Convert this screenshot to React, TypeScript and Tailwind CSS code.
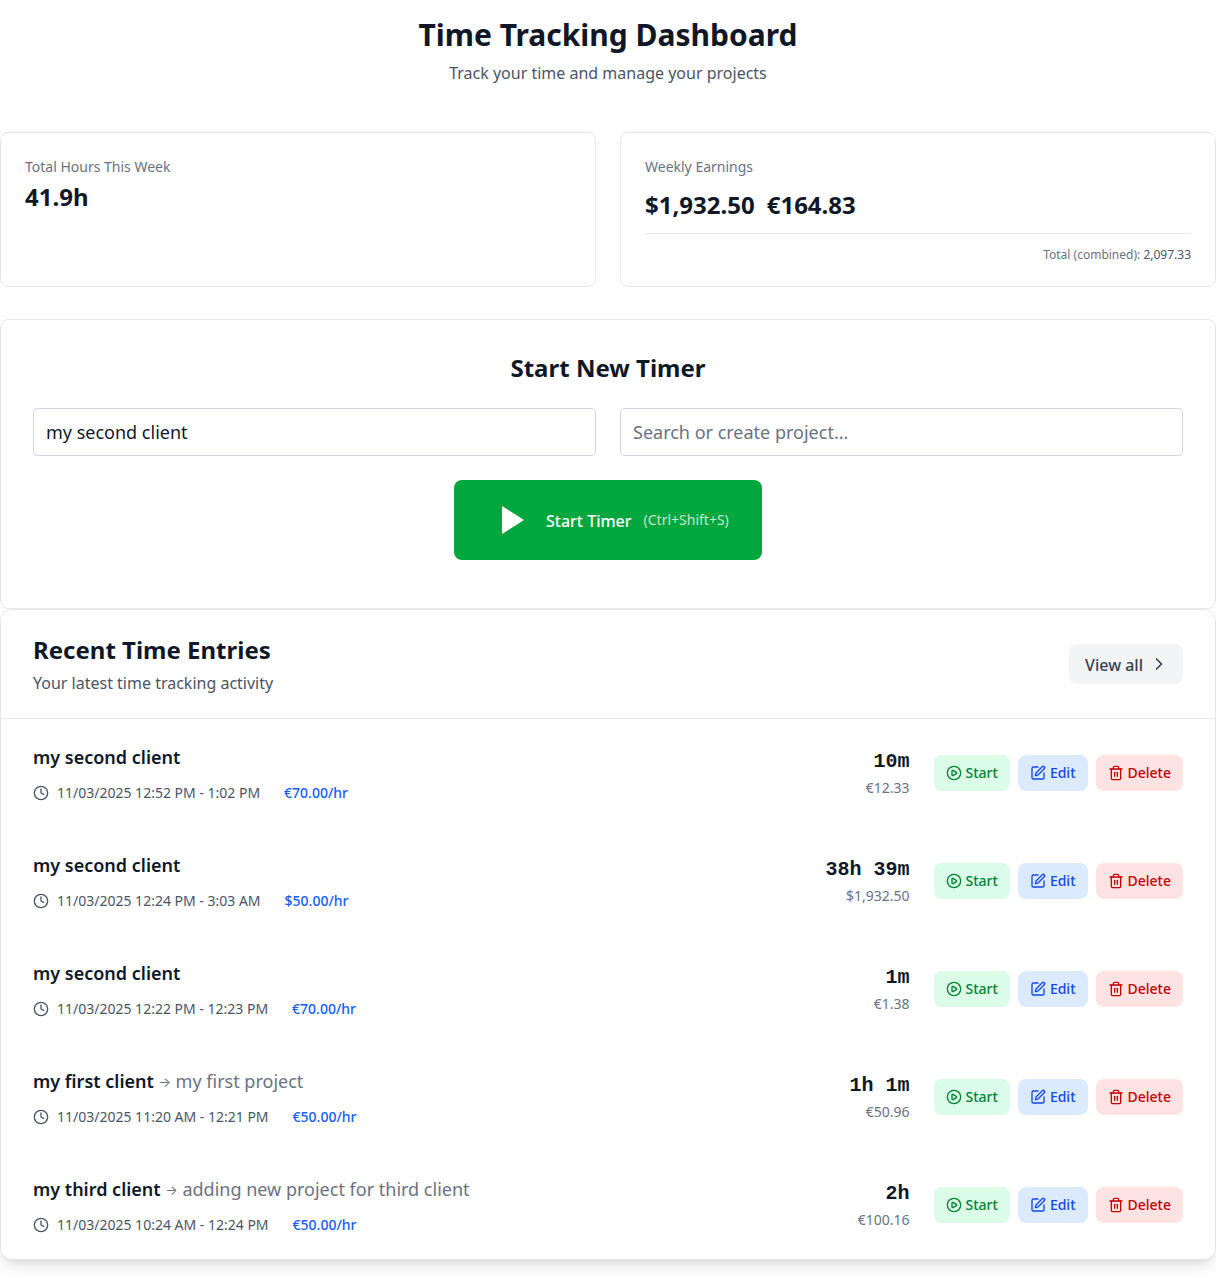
import { ChevronRight, CirclePlay, Clock, SquarePen, Trash2 } from 'lucide-react'

const entries = [
  { client: 'my second client', time: '11/03/2025 12:52 PM - 1:02 PM', rate: '€70.00/hr', duration: '10m', amount: '€12.33' },
  { client: 'my second client', time: '11/03/2025 12:24 PM - 3:03 AM', rate: '$50.00/hr', duration: '38h 39m', amount: '$1,932.50' },
  { client: 'my second client', time: '11/03/2025 12:22 PM - 12:23 PM', rate: '€70.00/hr', duration: '1m', amount: '€1.38' },
  { client: 'my first client', project: 'my first project', time: '11/03/2025 11:20 AM - 12:21 PM', rate: '€50.00/hr', duration: '1h 1m', amount: '€50.96' },
  { client: 'my third client', project: 'adding new project for third client', time: '11/03/2025 10:24 AM - 12:24 PM', rate: '€50.00/hr', duration: '2h', amount: '€100.16' },
]

export default function App() {
  return (
    <div className="bg-white pb-4 font-['Noto_Sans',sans-serif] text-gray-900">
      {/* Header */}
      <div className="pt-[17px] mb-[47px] text-center">
        <h1 className="text-3xl font-bold">Time Tracking Dashboard</h1>
        <p className="mt-2 text-base text-gray-600">Track your time and manage your projects</p>
      </div>

      {/* Stats */}
      <div className="grid grid-cols-2 gap-6 mb-8">
        <div className="bg-white rounded-lg border border-gray-200 p-6">
          <div className="text-sm text-gray-500">Total Hours This Week</div>
          <div className="mt-1 text-2xl font-bold">41.9h</div>
        </div>
        <div className="bg-white rounded-lg border border-gray-200 p-6">
          <div className="text-sm text-gray-500">Weekly Earnings</div>
          <div className="mt-3 flex gap-3 text-2xl font-bold">
            <span>$1,932.50</span>
            <span>€164.83</span>
          </div>
          <div className="mt-3 border-t border-gray-200 pt-[13px] -mb-px text-right text-xs text-gray-500">
            Total (combined): <span className="text-gray-600">2,097.33</span>
          </div>
        </div>
      </div>

      {/* Timer */}
      <div className="bg-white rounded-lg border border-gray-200 px-8 pt-8 pb-12">
        <h2 className="mb-6 text-center text-2xl font-bold">Start New Timer</h2>
        <div className="grid grid-cols-2 gap-6 mb-6">
          <input
            readOnly
            value="my second client"
            className="h-12 w-full rounded border border-gray-300 px-3 text-lg text-gray-900 outline-none"
          />
          <input
            readOnly
            placeholder="Search or create project..."
            className="h-12 w-full rounded border border-gray-300 px-3 text-lg text-gray-900 outline-none placeholder:text-gray-500"
          />
        </div>
        <div className="flex justify-center">
          <button className="flex w-[308px] items-center gap-3 rounded-lg bg-green-600 px-8 py-4 text-white">
            <svg viewBox="0 0 24 24" fill="currentColor" className="h-12 w-12">
              <path d="M8 5v14l11-7z" />
            </svg>
            <span className="pt-0.5 text-base font-medium">Start Timer</span>
            <span className="text-sm opacity-75">(Ctrl+Shift+S)</span>
          </button>
        </div>
      </div>

      {/* Recent entries */}
      <div className="bg-white rounded-xl border border-gray-200 shadow-lg">
        <div className="flex justify-between border-b border-gray-200 px-8 py-6 h-[109px]">
          <div>
            <h2 className="text-2xl font-bold">Recent Time Entries</h2>
            <p className="mt-[5px] text-base text-gray-600">Your latest time tracking activity</p>
          </div>
          <button className="flex h-10 items-center gap-1.5 self-center rounded-lg bg-gray-100 pl-4 pr-3.5 text-base font-medium text-gray-700">
            <span className="pt-0.5">View all</span>
            <ChevronRight className="h-5 w-5" />
          </button>
        </div>
        <div>
          {entries.map((entry, i) => (
            <div key={i} className="flex h-[108px] items-center justify-between px-8">
              <div>
                <div className="text-lg">
                  <span className="font-semibold">{entry.client}</span>
                  {entry.project && (
                    <span className="text-gray-500">
                      {' '}
                      <span className="font-['Inter'] align-[1.5px] text-[13px]">→</span> {entry.project}
                    </span>
                  )}
                </div>
                <div className="mt-3 flex items-center text-sm text-gray-600">
                  <Clock className="mr-2 h-4 w-4" />
                  <span>{entry.time}</span>
                  <span className="ml-6 font-medium text-blue-600">{entry.rate}</span>
                </div>
              </div>
              <div className="flex items-center gap-6">
                <div className="text-right">
                  <div className="font-['Liberation_Mono',monospace] text-xl font-bold">{entry.duration}</div>
                  <div className="mt-0.5 text-sm text-gray-500">{entry.amount}</div>
                </div>
                <div className="flex items-center gap-2">
                  <button className="flex items-center gap-1 rounded-lg bg-green-100 px-3 py-2 text-sm font-medium text-green-700">
                    <CirclePlay className="h-4 w-4" />
                    Start
                  </button>
                  <button className="flex items-center gap-1 rounded-lg bg-blue-100 px-3 py-2 text-sm font-medium text-blue-700">
                    <SquarePen className="h-4 w-4" />
                    Edit
                  </button>
                  <button className="flex items-center gap-1 rounded-lg bg-red-100 px-3 py-2 text-sm font-medium text-red-700">
                    <Trash2 className="h-4 w-4" />
                    Delete
                  </button>
                </div>
              </div>
            </div>
          ))}
        </div>
      </div>
    </div>
  )
}
